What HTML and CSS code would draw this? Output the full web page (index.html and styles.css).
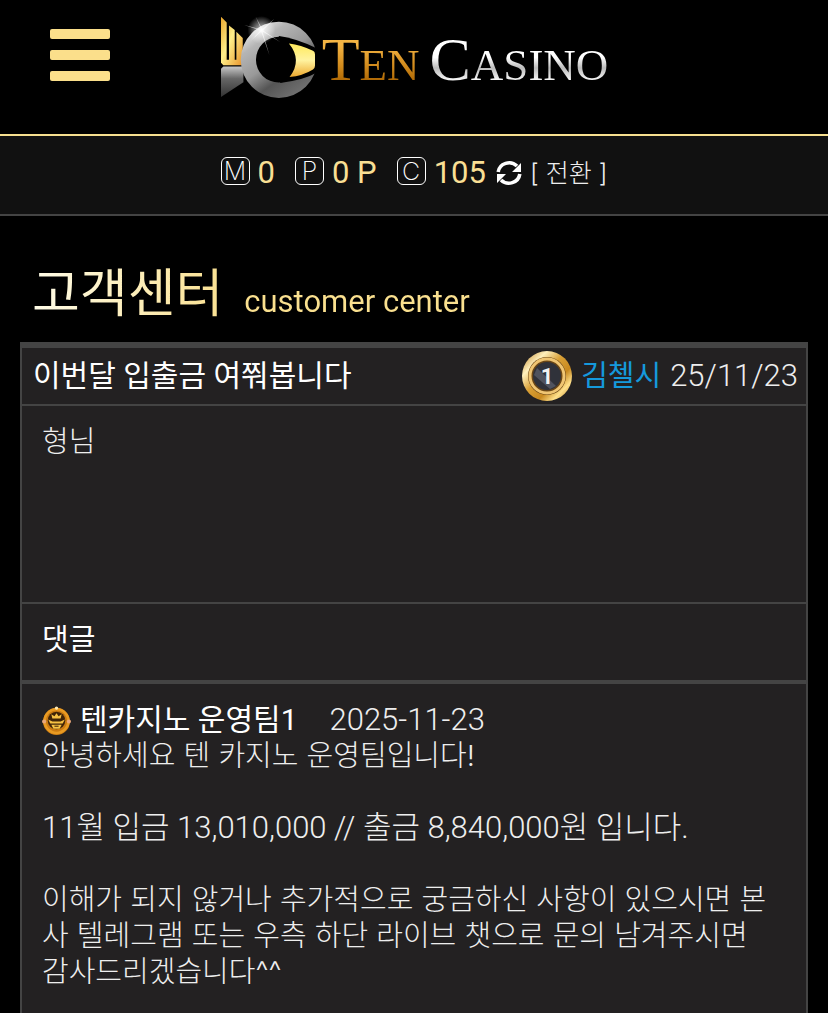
FILE: index.html
```html
<!DOCTYPE html>
<html lang="ko">
<head>
  <meta charset="UTF-8" />
  <meta name="viewport" content="width=device-width, initial-scale=1.0" />
  <title>Ten Casino - 고객센터</title>
  <link rel="stylesheet" href="styles.css">
</head>
<body>
  <header>
    <button class="menu-btn" type="button" aria-label="메뉴">
      <span></span><span></span><span></span>
    </button>
    <a class="logo" href="#">
      <svg class="logo-mark" viewBox="60 40 290 260" aria-hidden="true">
        <defs>
          <linearGradient id="gold" x1="0" y1="0" x2="1" y2="1">
            <stop offset="0" stop-color="#e9a52c" />
            <stop offset="0.45" stop-color="#fff08a" />
            <stop offset="1" stop-color="#e8932b" />
          </linearGradient>
          <linearGradient id="eye" x1="0" y1="0" x2="0" y2="1">
            <stop offset="0" stop-color="#ffe95a" />
            <stop offset="0.5" stop-color="#fff3a0" />
            <stop offset="1" stop-color="#eda92f" />
          </linearGradient>
          <linearGradient id="ring" x1="0.1" y1="0" x2="0.8" y2="1">
            <stop offset="0" stop-color="#fff" />
            <stop offset="0.25" stop-color="#b5b5b5" />
            <stop offset="0.5" stop-color="#999" />
            <stop offset="0.7" stop-color="#555" />
            <stop offset="1" stop-color="#777" />
          </linearGradient>
          <linearGradient id="steel" x1="0" y1="0" x2="0" y2="1">
            <stop offset="0" stop-color="#c8c8c8" />
            <stop offset="0.4" stop-color="#666" />
            <stop offset="1" stop-color="#333" />
          </linearGradient>
          <radialGradient id="glow">
            <stop offset="0" stop-color="#fff" />
            <stop offset="0.25" stop-color="#fff" stop-opacity="0.6" />
            <stop offset="1" stop-color="#fff" stop-opacity="0" />
          </radialGradient>
        </defs>
        <path fill="url(#gold)" d="M63 48L80 65V177H87V74L104 88V177H109V93L128 112V193H70L63 186Z" />
        <path fill="url(#steel)" d="M63 204L70 197H130V244L63 288Z" />
        <path fill="url(#ring)" fill-rule="evenodd" d="M236 63A114 114 0 1 0 236 291A114 114 0 1 0 236 63ZM236 108A68 68 0 1 1 236 245A68 68 0 1 1 236 108Z" />
        <path d="M236 106Q285 112 350 143V215Q310 238 240 246Z" />
        <path fill="url(#eye)" d="M266 128Q302 132 338 150Q344 153 344 160V195Q344 202 338 206Q306 226 268 228Q307 178 266 128Z" />
        <circle cx="184" cy="88" r="42" fill="url(#glow)" />
        <path fill="#fff" d="M132 73L183 86L166 47L186 85L222 55L189 89L240 124L187 92L208 163L183 92L150 122L181 89Z" opacity="0.6" />
      </svg>
      <span class="logo-ten">T<small>EN</small></span>
      <span class="logo-casino">C<small>ASINO</small></span>
    </a>
  </header>

  <div class="balance">
    <div class="stat"><span class="badge">M</span><b>0</b></div>
    <div class="stat"><span class="badge">P</span><b>0 P</b></div>
    <div class="stat"><span class="badge">C</span><b>105</b></div>
    <button class="exchange" type="button">
      <svg viewBox="0 0 26 26" aria-hidden="true">
        <path fill="none" stroke="#fff" stroke-width="3.6" d="M2.2 12A11 10.5 0 0 1 21 6M23.8 14A11 10.5 0 0 1 5 20" />
        <path fill="#fff" d="M25 3V12H16ZM1 23V14H10Z" />
      </svg>
      <span>[ 전환 ]</span>
    </button>
  </div>

  <main>
    <h1>고객센터 <small>customer center</small></h1>

    <article class="post">
      <div class="post-head">
        <h2>이번달 입출금 여쭤봅니다</h2>
        <div class="post-info">
          <svg class="level" viewBox="0 0 50 50" role="img" aria-label="레벨 1">
            <defs>
              <linearGradient id="coin" x1="0" y1="0" x2="1" y2="1">
                <stop offset="0" stop-color="#b8791a" />
                <stop offset="0.25" stop-color="#fff0bd" />
                <stop offset="0.45" stop-color="#d9a036" />
                <stop offset="0.65" stop-color="#c8891f" />
                <stop offset="0.8" stop-color="#ffe08a" />
                <stop offset="1" stop-color="#b8791a" />
              </linearGradient>
            </defs>
            <circle cx="25" cy="25" r="25" fill="url(#coin)" />
            <circle cx="25" cy="25" r="19" fill="#6b4716" />
            <circle cx="25" cy="25" r="17" fill="none" stroke="#f0c572" stroke-width="3" />
            <circle cx="25" cy="25" r="14" fill="#30323a" />
            <path fill="#50535e" d="M15 17L34 35L28 38L12 24Z" />
            <text x="25" y="33" text-anchor="middle">1</text>
          </svg>
          <span class="name">김첼시</span>
          <time datetime="2025-11-23">25/11/23</time>
        </div>
      </div>
      <div class="post-body">형님</div>
      <h3>댓글</h3>
      <div class="comment">
        <div class="comment-head">
          <svg class="crest" viewBox="0 0 28 28" aria-hidden="true">
            <circle cx="14" cy="15" r="13" fill="#c97a12" />
            <circle cx="14" cy="14.5" r="11.5" fill="none" stroke="#e89a22" stroke-width="2.5" />
            <circle cx="14" cy="14" r="8.5" fill="#402408" />
            <path fill="#f6c143" d="M9 8L12 10L14 7L16 10L19 8L18 12H10ZM6 13L10 15H18L22 13L20 17H8ZM9 18H19L17 22H11Z" />
            <path fill="#402408" d="M12 19H16V20H12Z" />
            <circle cx="14" cy="2" r="1.6" fill="#ffe9b0" />
            <circle cx="2" cy="15" r="2" fill="#e9a77a" />
            <circle cx="26" cy="15" r="2" fill="#e9a77a" />
          </svg>
          <strong>텐카지노 운영팀1</strong>
          <time datetime="2025-11-23">2025-11-23</time>
        </div>
        <p>안녕하세요 텐 카지노 운영팀입니다!</p>
        <p class="amount">11월 입금 13,010,000 // 출금 8,840,000원 입니다.</p>
        <p>이해가 되지 않거나 추가적으로 궁금하신 사항이 있으시면 본사 텔레그램 또는 우측 하단 라이브 챗으로 문의 남겨주시면 감사드리겠습니다^^</p>
      </div>
    </article>
  </main>
</body>
</html>
```
FILE: styles.css
```css
* { box-sizing: border-box; }
body {
  margin: 0;
  background: #000;
  color: #eee;
  font-family: Roboto, 'Noto Sans CJK KR', sans-serif;
  font-size: 29px;
  font-weight: 300;
  line-height: 36px;
}
h1, h2, h3, p { margin: 0; }
button {
  background: none; border: 0; padding: 0;
  color: inherit; font: inherit; cursor: pointer;
}

header {
  display: grid;
  grid-template-columns: 1fr auto 1fr;
  align-items: start;
  height: 136px;
  padding-top: 14px;
  border-bottom: 2px solid #f6df8f;
}
.menu-btn {
  display: flex; flex-direction: column;
  gap: 11px;
  width: 60px;
  margin: 15px 0 0 50px;
}
.menu-btn span {
  height: 10px;
  border-radius: 2px;
  background: #fbdf8b;
}
.logo {
  display: flex;
  align-items: flex-start;
  font-family: 'Liberation Serif', serif;
  font-size: 62px;
  font-weight: 400;
  line-height: 84px;
  text-decoration: none;
}
.logo small { font-size: 45px; line-height: 1; }
.logo-mark { width: 97px; height: 87px; margin-right: 5px; }
.logo-ten, .logo-casino {
  padding-top: 3px;
  background: linear-gradient(#f5b544 35%, #d18a1c 60%, #a86200 80%);
  -webkit-background-clip: text;
  background-clip: text;
  color: transparent;
}
.logo-casino {
  margin-left: 10px;
  background-image: linear-gradient(#fff 50%, #bbb 62%, #fff 78%);
}

.balance {
  display: flex;
  justify-content: center;
  align-items: center;
  height: 80px;
  padding-bottom: 4px;
  background: #111;
  border-bottom: 2px solid #444;
}
.stat {
  display: flex; align-items: center;
  gap: 8px;
  margin-right: 20px;
}
.stat:nth-child(3) { margin-right: 10px; }
.stat b {
  color: #f9df94;
  font-size: 31px;
  font-weight: 400;
}
.badge {
  width: 29px; height: 28px;
  margin-bottom: 4px;
  border: 1px solid #fff;
  border-radius: 6px;
  color: #fff;
  font-family: Inter, sans-serif;
  font-size: 25px;
  font-weight: 200;
  line-height: 26px;
  text-align: center;
}
.exchange {
  display: flex; align-items: center;
  gap: 8px;
  font-family: Inter, 'Noto Sans CJK KR', sans-serif;
  font-size: 25px;
}
.exchange svg { width: 26px; height: 26px; }

main { padding: 42px 20px 0; }
h1 {
  width: max-content;
  margin: 0 0 10px 12px;
  background: linear-gradient(to right, #fffce8, #fae08f 45%);
  -webkit-background-clip: text;
  background-clip: text;
  color: transparent;
  font-size: 52px;
  font-weight: 400;
  line-height: 74px;
}
h1 small { margin-left: 8px; font-size: 31px; line-height: 1; }

.post {
  background: #232122;
  border: 2px solid #444;
  border-width: 6px 2px 0;
}
.post-head {
  display: flex;
  justify-content: space-between;
  align-items: center;
  height: 58px;
  padding: 0 8px 0 11px;
  border-bottom: 2px solid #444;
}
.post-head h2 {
  color: #fff;
  font-size: 30px;
  font-weight: 400;
}
.post-info { display: flex; align-items: center; gap: 9px; }
.post-info time { font-size: 31px; }
.level { width: 50px; height: 50px; }
.level text {
  fill: #f2f2f2;
  font: 700 22px Roboto, sans-serif;
}
.name { color: #1599dc; font-weight: 400; }
.post-body {
  min-height: 198px;
  padding: 18px 20px;
  border-bottom: 2px solid #444;
}
.post h3 {
  padding: 18px 20px 22px;
  border-bottom: 4px solid #444;
  color: #fff;
  font-size: 29px;
  font-weight: 400;
}
.comment { padding: 18px 28px 24px 20px; }
.comment-head { display: flex; align-items: center; }
.comment-head strong {
  margin: 0 32px 0 9px;
  color: #fff;
  font-size: 30px;
  font-weight: 400;
}
.comment-head time { font-size: 31px; }
.crest { width: 29px; height: 29px; }
.comment p {
  font-family: Inter, 'Noto Sans CJK KR', sans-serif;
}
.comment p + p { margin-top: 36px; }
.comment .amount {
  font-family: Roboto, 'Noto Sans CJK KR', sans-serif;
  font-size: 31px;
}
```
